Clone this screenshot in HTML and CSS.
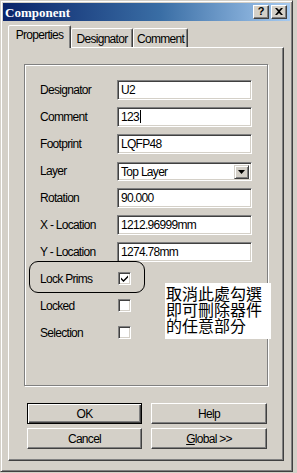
FILE: index.html
```html
<!DOCTYPE html>
<html>
<head>
<meta charset="utf-8">
<link rel="stylesheet" href="styles.css">
</head>
<body>
<div class="window">
  <div class="titlebar">
    <span class="title">Component</span>
    <div class="tbtns">
      <span class="tbtn">?</span>
      <span class="tbtn x">
        <svg width="8" height="7" viewBox="0 0 8 7"><path d="M0 0h2l2 2 2-2h2L5 3.5 8 7H6L4 5 2 7H0l3-3.5z" fill="#000"/></svg>
      </span>
    </div>
  </div>
  <div class="client">
    <div class="tabs">
      <div class="tab active t1">Properties</div>
      <div class="tab t2">Designator</div>
      <div class="tab t3">Comment</div>
    </div>
    <div class="panel">
      <div class="group">
        <div class="fields">
          <label class="lbl">Designator</label>
          <div class="input">U2</div>
          <label class="lbl">Comment</label>
          <div class="input">123<span class="caret"></span></div>
          <label class="lbl">Footprint</label>
          <div class="input">LQFP48</div>
          <label class="lbl">Layer</label>
          <div class="input select">Top Layer<span class="drop"><svg width="7" height="4" viewBox="0 0 7 4"><path d="M0 0h7L3.5 4z" fill="#000"/></svg></span></div>
          <label class="lbl">Rotation</label>
          <div class="input">90.000</div>
          <label class="lbl">X - Location</label>
          <div class="input">1212.96999mm</div>
          <label class="lbl">Y - Location</label>
          <div class="input">1274.78mm</div>
        </div>
        <div class="checks">
          <label class="lbl">Lock Prims</label>
          <span class="cb"><svg width="9" height="9" viewBox="0 0 9 9"><path d="M1 3.5l2.5 2.5L8 1.5v2L3.5 8 1 5.5z" fill="#000"/></svg></span>
          <label class="lbl">Locked</label>
          <span class="cb"></span>
          <label class="lbl">Selection</label>
          <span class="cb"></span>
        </div>
        <div class="ring"></div>
        <div class="note">取消此處勾選<br>即可刪除器件<br>的任意部分</div>
      </div>
      <div class="buttons">
        <button class="btn default">OK</button>
        <button class="btn">Help</button>
        <button class="btn">Cancel</button>
        <button class="btn"><u>G</u>lobal &gt;&gt;</button>
      </div>
    </div>
  </div>
</div>
</body>
</html>
```
FILE: styles.css
```css
* { box-sizing: border-box; }
html, body { margin: 0; padding: 0; }
body {
  width: 297px;
  height: 473px;
  background: #d4d0c8;
  font-family: "Liberation Sans", Arial, sans-serif;
  font-size: 12px;
  letter-spacing: -0.7px;
  color: #000;
  overflow: hidden;
}
.window {
  width: 293px;
  height: 472px;
  background: #d4d0c8;
  border: 1px solid;
  border-color: #d4d0c8 #404040 #404040 #d4d0c8;
  box-shadow: inset 1px 1px #fff, inset -1px -1px #808080;
  padding: 2px;
}
.titlebar {
  height: 18px;
  background: linear-gradient(to right, #0a246a 0%, #3a6ea5 55%, #a6caf0 100%);
  display: flex;
  align-items: center;
  justify-content: space-between;
  padding: 0 3px 0 2px;
}
.title {
  font-family: "Liberation Serif", "Times New Roman", serif;
  font-weight: bold;
  font-size: 13px;
  letter-spacing: 0;
  color: #fff;
  margin-top: 1px;
}
.tbtns { display: flex; gap: 2px; }
.tbtn {
  width: 16px;
  height: 14px;
  background: #d4d0c8;
  border: 1px solid;
  border-color: #fff #404040 #404040 #fff;
  box-shadow: inset -1px -1px #808080;
  display: flex;
  align-items: center;
  justify-content: center;
  font-family: "Liberation Sans", Arial, sans-serif;
  font-weight: bold;
  font-size: 11px;
  letter-spacing: 0;
  line-height: 1;
  padding-bottom: 1px;
}
.client { padding: 5px 0 0 5px; }
.tabs {
  display: flex;
  height: 21px;
  align-items: flex-end;
  position: relative;
  z-index: 1;
}
.tab {
  height: 19px;
  background: #d4d0c8;
  border: 1px solid;
  border-bottom: none;
  border-color: #fff #404040 transparent #fff;
  box-shadow: inset -1px 0 #808080;
  border-radius: 2px 2px 0 0;
  text-align: center;
  line-height: 18px;
  padding-top: 1px;
}
.tab.active {
  height: 23px;
  margin-bottom: -1px;
  line-height: 16px;
  padding-top: 1px;
}
.t1 { width: 63px; }
.t2 { width: 62px; }
.t3 { width: 55px; }
.panel {
  width: 276px;
  height: 414px;
  border: 1px solid;
  border-color: #fff #404040 #404040 #fff;
  box-shadow: inset -1px -1px #808080;
  padding: 16px 15px 0 15px;
}
.group {
  position: relative;
  width: 244px;
  height: 322px;
  border: 1px solid #808080;
  box-shadow: inset 1px 1px #fff, 1px 1px #fff;
  padding: 15px 0 0 15px;
}
.fields {
  display: grid;
  grid-template-columns: 77px 135px;
  grid-auto-rows: 20px;
  row-gap: 7px;
  align-items: center;
}
.lbl { white-space: nowrap; }
.input {
  height: 20px;
  background: #fff;
  border: 1px solid;
  border-color: #808080 #fff #fff #808080;
  box-shadow: inset 1px 1px #404040, inset -1px -1px #d4d0c8;
  padding: 0 0 0 3px;
  line-height: 18px;
  white-space: nowrap;
  position: relative;
}
.caret {
  display: inline-block;
  width: 1px;
  height: 13px;
  background: #000;
  vertical-align: -2px;
  margin-left: 1px;
}
.select { height: 19px; }
.drop {
  position: absolute;
  right: 2px;
  top: 2px;
  width: 15px;
  height: 14px;
  background: #d4d0c8;
  border: 1px solid;
  border-color: #d4d0c8 #404040 #404040 #d4d0c8;
  box-shadow: inset 1px 1px #fff, inset -1px -1px #808080;
  display: flex;
  align-items: center;
  justify-content: center;
}
.checks {
  display: grid;
  grid-template-columns: 78px 13px;
  grid-auto-rows: 13px;
  row-gap: 14px;
  align-items: center;
  margin-top: 10px;
}
.cb {
  width: 13px;
  height: 13px;
  background: #fff;
  border: 1px solid;
  border-color: #808080 #fff #fff #808080;
  box-shadow: inset 1px 1px #404040, inset -1px -1px #d4d0c8;
  display: flex;
  align-items: center;
  justify-content: center;
}
.ring {
  position: absolute;
  left: 4px;
  top: 196px;
  width: 116px;
  height: 32px;
  border: 1px solid #000;
  border-radius: 9px;
}
.note {
  position: absolute;
  left: 140px;
  top: 218px;
  width: 106px;
  height: 56px;
  background: #fff;
  font-family: "Noto Sans CJK TC", "Noto Sans CJK SC", sans-serif;
  font-size: 16px;
  line-height: 16px;
  letter-spacing: 0;
  padding: 2px 0 0 1px;
}
.buttons {
  display: grid;
  grid-template-columns: 115px 116px;
  grid-auto-rows: 21px;
  column-gap: 9px;
  row-gap: 4px;
  margin: 17px 0 0 3px;
}
.btn {
  font-family: "Liberation Sans", Arial, sans-serif;
  font-size: 12px;
  letter-spacing: -0.7px;
  color: #000;
  background: #d4d0c8;
  border: 1px solid;
  border-color: #fff #404040 #404040 #fff;
  box-shadow: inset -1px -1px #808080;
  padding: 0;
  margin: 0;
  line-height: 18px;
}
.btn.default {
  border: 1px solid #000;
  box-shadow: inset 1px 1px #fff, inset -1px -1px #404040, inset -2px -2px #808080;
}
```
